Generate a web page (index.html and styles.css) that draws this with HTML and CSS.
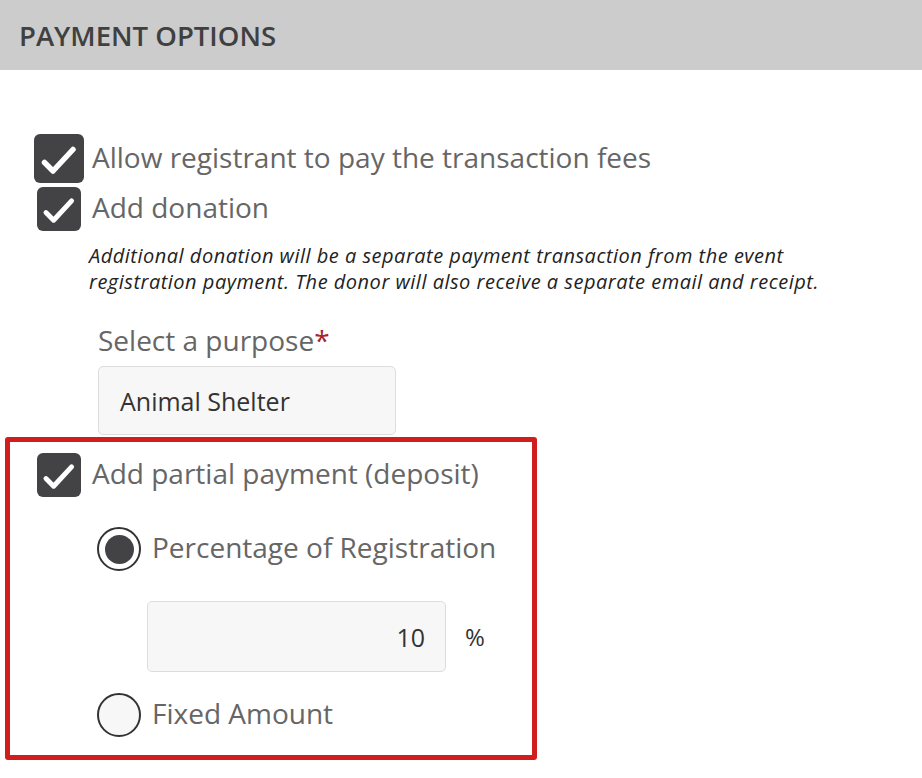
FILE: index.html
```html
<!DOCTYPE html>
<html lang="en">
<head>
<meta charset="utf-8">
<title>Payment Options</title>
<link rel="stylesheet" href="styles.css">
</head>
<body>
<header class="section-head">PAYMENT OPTIONS</header>
<main class="section-body">
  <div class="check-row row-fees">
    <span class="cb cb-lg"><svg viewBox="0 0 49 49"><path d="M10 28.5l8.5 8.5 20-21.5"/></svg></span>
    <span class="label">Allow registrant to pay the transaction fees</span>
  </div>
  <div class="check-row row-donation">
    <span class="cb"><svg viewBox="0 0 49 49"><path d="M10 28.5l8.5 8.5 20-21.5"/></svg></span>
    <span class="label">Add donation</span>
  </div>
  <p class="note">Additional donation will be a separate payment transaction from the event registration payment. The donor will also receive a separate email and receipt.</p>
  <div class="field">
    <div class="field-label">Select a purpose<span class="req">*</span></div>
    <div class="select">Animal Shelter</div>
  </div>
  <div class="highlight">
    <div class="check-row row-partial">
      <span class="cb"><svg viewBox="0 0 49 49"><path d="M10 28.5l8.5 8.5 20-21.5"/></svg></span>
      <span class="label">Add partial payment (deposit)</span>
    </div>
    <div class="radio-row row-pct">
      <span class="radio checked"></span>
      <span class="label">Percentage of Registration</span>
    </div>
    <div class="amount-row">
      <div class="amount-input">10</div>
      <span class="unit">%</span>
    </div>
    <div class="radio-row row-fixed">
      <span class="radio"></span>
      <span class="label">Fixed Amount</span>
    </div>
  </div>
</main>
</body>
</html>
```
FILE: styles.css
```css
* { box-sizing: border-box; }
html, body { margin: 0; padding: 0; background: #fff; }
body {
  font-family: "Open Sans", "Liberation Sans", sans-serif;
  color: #666;
  width: 922px;
  height: 778px;
  overflow: hidden;
}
.section-head {
  height: 70px;
  background: #cccccc;
  color: #404040;
  font-weight: 600;
  font-size: 27.5px;
  padding-left: 19px;
  display: flex;
  align-items: center;
}
.section-body {
  padding-top: 64px;
}
.check-row {
  display: flex;
  align-items: center;
}
.label {
  font-size: 28px;
  line-height: 34px;
  color: #666;
  position: relative;
  top: -2px;
}
.cb {
  width: 44px;
  height: 44px;
  border-radius: 6px;
  background: #434244;
  display: flex;
  flex: none;
}
.cb svg { width: 100%; height: 100%; }
.cb path {
  fill: none;
  stroke: #fff;
  stroke-width: 5.5;
  stroke-linecap: round;
  stroke-linejoin: round;
}
.cb-lg { width: 50px; height: 49px; }
.row-fees { padding-left: 34px; gap: 8px; }
.row-donation { padding-left: 37px; gap: 11px; margin-top: 4px; }
.note {
  margin: 12px 0 0 89px;
  font-size: 20px;
  letter-spacing: 0.5px;
  line-height: 26px;
  font-style: italic;
  color: #222;
  width: 760px;
}
.field { margin: 28px 0 0 98px; }
.field-label { font-size: 28px; line-height: 34px; color: #666; }
.req { color: #a8232a; }
.select {
  margin-top: 9px;
  width: 298px;
  height: 69px;
  border: 1px solid #ddd;
  border-radius: 5px;
  background: #f7f7f7;
  color: #333;
  font-size: 25px;
  display: flex;
  align-items: center;
  padding-left: 21px;
}
.highlight {
  margin: 2px 0 0 5px;
  width: 532px;
  height: 323px;
  border: 5px solid #d01d1d;
  border-radius: 3px;
  padding: 11px 0 0 27px;
}
.row-partial { gap: 11px; }
.radio-row {
  display: flex;
  align-items: center;
  gap: 11px;
  padding-left: 60px;
}
.row-pct { margin-top: 30px; }
.radio {
  width: 44px;
  height: 44px;
  border-radius: 50%;
  border: 2px solid #333;
  background: #f7f7f7;
  flex: none;
  position: relative;
}
.radio.checked {
  background: #fff;
}
.radio.checked::after {
  content: "";
  position: absolute;
  left: 5.5px;
  top: 5.5px;
  width: 29px;
  height: 29px;
  border-radius: 50%;
  background: #434244;
}
.amount-row {
  display: flex;
  align-items: center;
  margin: 30px 0 0 110px;
}
.amount-input {
  width: 299px;
  height: 71px;
  border: 1px solid #ddd;
  border-radius: 5px;
  background: #f7f7f7;
  color: #333;
  font-size: 25px;
  display: flex;
  align-items: center;
  justify-content: flex-end;
  padding-right: 20px;
}
.unit {
  margin-left: 19px;
  font-size: 24px;
  color: #333;
}
.row-fixed { margin-top: 21px; }
```
